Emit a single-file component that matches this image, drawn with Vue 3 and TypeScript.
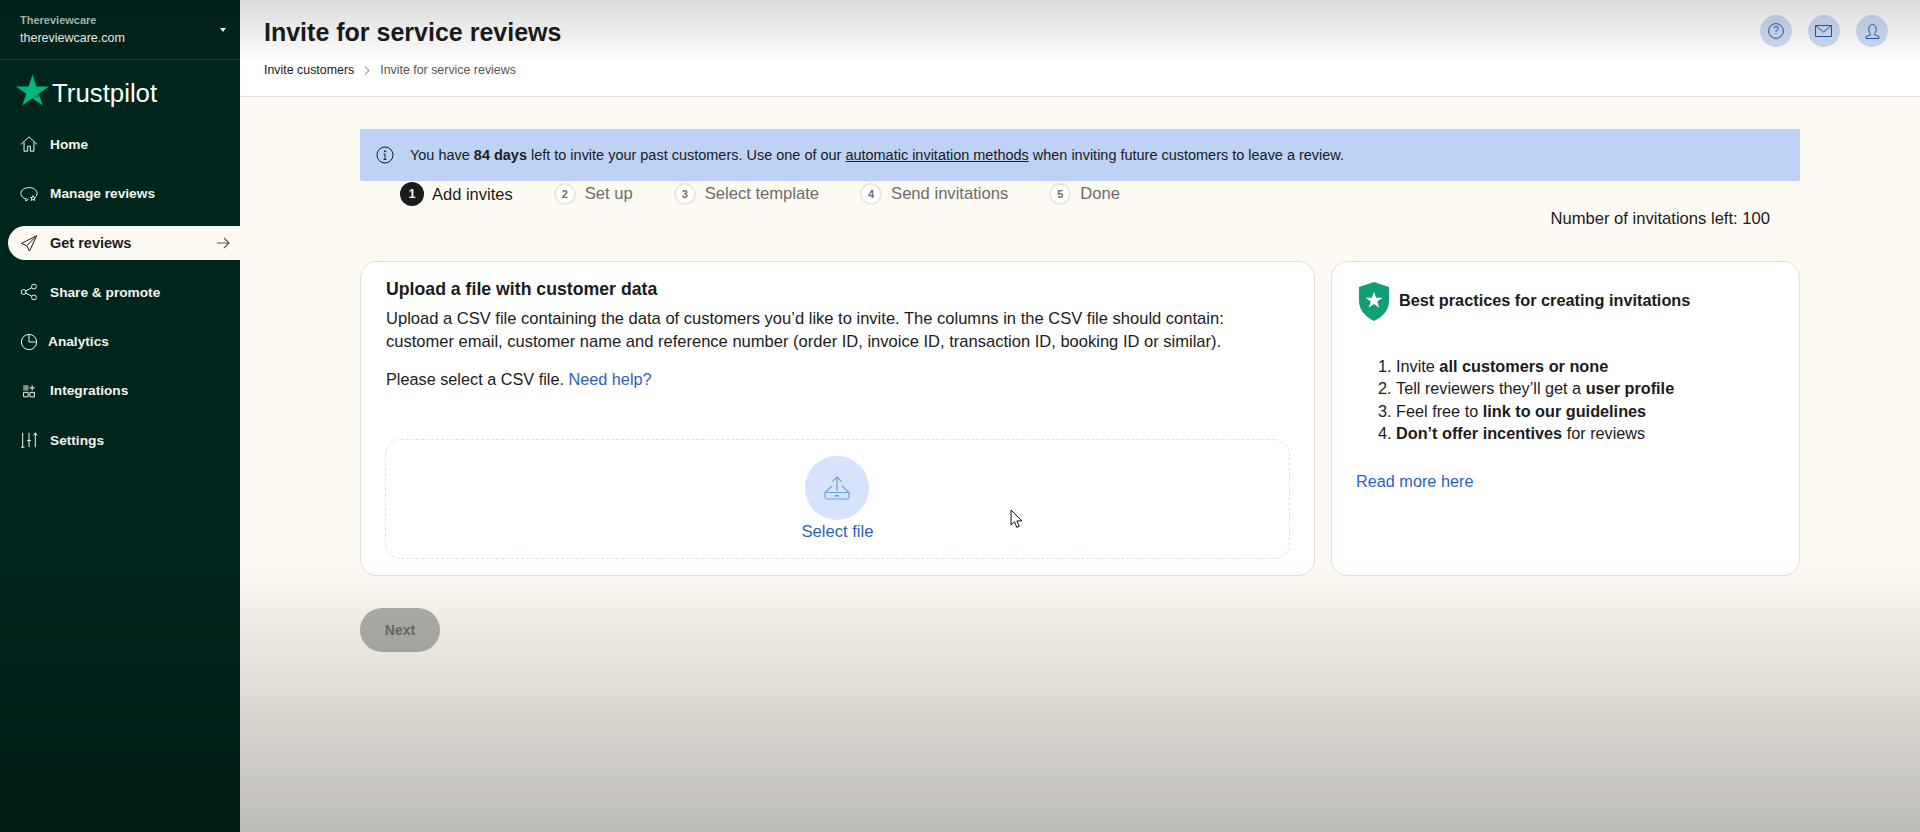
<script setup lang="ts">
const navItems = [
  { label: 'Home', icon: 'home' },
  { label: 'Manage reviews', icon: 'chat' },
  { label: 'Get reviews', icon: 'send', active: true },
  { label: 'Share & promote', icon: 'share' },
  { label: 'Analytics', icon: 'pie', tight: true },
  { label: 'Integrations', icon: 'grid' },
  { label: 'Settings', icon: 'sliders' }
]

const steps = ['Add invites', 'Set up', 'Select template', 'Send invitations', 'Done']
</script>

<template>
  <div class="page">
    <aside class="sidebar">
      <div class="account">
        <div>
          <div class="accountName">Thereviewcare</div>
          <div class="accountDomain">thereviewcare.com</div>
        </div>
        <span class="caret"></span>
      </div>
      <div class="logo">
        <svg width="33" height="32" viewBox="0 0 34 32">
          <path fill="#00b67a" d="M17 0l4 12.300h13l-10.500 7.600 4 12.100L17 24.500 6.500 32l4-12.100L0 12.300h13z" />
          <path fill="#04865c" d="M23.500 19.900l.9 2.900-7.400 1.700z" />
        </svg>
        <span class="logoText">Trustpilot</span>
      </div>
      <nav class="nav">
        <a v-for="item in navItems" :key="item.label" class="navItem" :class="{ active: item.active, tight: item.tight }">
          <svg class="navIcon" width="18" height="18" viewBox="0 0 20 20" fill="none" stroke="currentColor" stroke-width="1.100">
            <template v-if="item.icon === 'home'">
              <path d="M1 10.500L10 2l9 8.500M4.500 8v10h4v-5.500h3V18h4V8" />
            </template>
            <template v-else-if="item.icon === 'chat'">
              <path d="M6.500 16.500C3.500 15.800 1 13.500 1 10.500 1 6.500 5.300 4 10 4s9 2.500 9 6.500c0 1.200-.4 2.300-1 3.200" />
              <path d="M6.500 16v3l3-2.500M14.500 13l.9 2h2l-1.600 1.300.6 2-1.900-1.200-1.900 1.200.6-2-1.600-1.300h2z" />
            </template>
            <template v-else-if="item.icon === 'send'">
              <path d="M18.500 2L1.500 10.500l6 2.500 3 6zM18.500 2L7.500 13" />
            </template>
            <template v-else-if="item.icon === 'share'">
              <circle cx="4" cy="10" r="2.700" />
              <circle cx="15.500" cy="4" r="2.700" />
              <circle cx="15.500" cy="16" r="2.700" />
              <path d="M6.400 8.800l6.700-3.500M6.400 11.200l6.700 3.500" />
            </template>
            <template v-else-if="item.icon === 'pie'">
              <circle cx="10" cy="10" r="8.500" />
              <path d="M10 1.500V10h8.500" />
            </template>
            <template v-else-if="item.icon === 'grid'">
              <path fill="#7f938c" stroke="none" d="M3.500 3.500h6v6h-6z" />
              <path d="M4 11.500h5v5H4zM11 11.500h5v5h-5zM13.500 3.500v6M10.500 6.500h6" />
            </template>
            <template v-else>
              <path d="M3 2v16M1 18h4M10 2v16M7.800 10.500h4.400M17 2v16M15 5l2-3 2 3" />
            </template>
          </svg>
          <span>{{ item.label }}</span>
          <svg v-if="item.active" class="navArrow" width="14" height="12" viewBox="0 0 14 12" fill="none" stroke="currentColor" stroke-width="1.100">
            <path d="M1 6h12M8 1l5 5-5 5" />
          </svg>
        </a>
      </nav>
    </aside>

    <div class="main">
      <header class="topbar">
        <div>
          <h1>Invite for service reviews</h1>
          <div class="crumbs">
            <span class="crumbLink">Invite customers</span>
            <svg width="6" height="9" viewBox="0 0 6 9" fill="none" stroke="#6c6c6c"><path d="M1 .7l4 3.800-4 3.800" /></svg>
            <span class="crumbNow">Invite for service reviews</span>
          </div>
        </div>
        <div class="topActions">
          <button class="roundBtn">
            <svg width="16" height="16" viewBox="0 0 16 16" fill="none" stroke="#1c5bb8">
              <circle cx="8" cy="8" r="7.400" />
              <text x="8" y="11.300" text-anchor="middle" class="questionMark">?</text>
            </svg>
          </button>
          <button class="roundBtn mailBtn">
            <svg width="17" height="12" viewBox="0 0 17 12" fill="none" stroke="#1c5bb8">
              <path d="M.5.500h16v11H.5zM.5.500l8 6.500 8-6.500" />
            </svg>
          </button>
          <button class="roundBtn">
            <svg width="15" height="15" viewBox="0 0 15 15" fill="none" stroke="#1c5bb8">
              <path d="M5.300 9.500C3.800 7.800 3.700 5.800 3.900 4 4.200 1.800 5.800.5 7.500.5s3.300 1.300 3.600 3.500c.2 1.800.1 3.800-1.400 5.500v1.500l4.300 1.500v2H1v-2l4.300-1.500z" />
            </svg>
          </button>
        </div>
      </header>

      <section class="content">
        <div class="banner">
          <svg width="18" height="18" viewBox="0 0 18 18" fill="none" stroke="#1b1b1b">
            <circle cx="9" cy="9" r="8" />
            <path d="M9 8v5.500M7.500 8H9M7.500 13.500h3" />
            <circle cx="9" cy="5.300" r=".6" fill="#1b1b1b" />
          </svg>
          <span>You have <b>84 days</b> left to invite your past customers. Use one of our <u>automatic invitation methods</u> when inviting future customers to leave a review.</span>
        </div>

        <ol class="steps">
          <li v-for="(step, i) in steps" :key="step" class="step" :class="{ current: i === 0 }">
            <span class="stepNum">{{ i + 1 }}</span>
            <span>{{ step }}</span>
          </li>
        </ol>

        <div class="left100">Number of invitations left: 100</div>

        <div class="cards">
          <div class="card uploadCard">
            <h2>Upload a file with customer data</h2>
            <p class="intro">Upload a CSV file containing the data of customers you’d like to invite. The columns in the CSV file should contain: customer email, customer name and reference number (order ID, invoice ID, transaction ID, booking ID or similar).</p>
            <p class="select">Please select a CSV file. <a class="link">Need help?</a></p>
            <div class="dropzone">
              <div class="uploadCircle">
                <svg width="26" height="24" viewBox="0 0 26 24" fill="none" stroke="#6a9fdc" stroke-width="1.100">
                  <path d="M13 15V1M8.500 5.500L13 1l4.500 4.500" />
                  <path d="M8 10L1 16.500v4.700c0 1 .8 1.800 1.800 1.800h20.400c1 0 1.800-.8 1.800-1.800v-4.700L18 10M1 16.500h24" />
                  <path d="M11 19.800h4" stroke-width="1.600" />
                </svg>
              </div>
              <a class="link selectFile">Select file</a>
            </div>
          </div>

          <div class="card tipsCard">
            <div class="tipsHead">
              <svg width="30" height="39" viewBox="0 0 30 39">
                <path fill="#0f9f76" d="M15 0l15 5v14c0 9-6 15.500-15 20C6 34.500 0 28 0 19V5z" />
                <path fill="#fff" d="M15 9.500l2.100 6.200h6.500l-5.300 3.800 2 6.200-5.300-3.800-5.300 3.800 2-6.200-5.300-3.800h6.500z" />
              </svg>
              <h3>Best practices for creating invitations</h3>
            </div>
            <ol class="tips">
              <li>Invite <b>all customers or none</b></li>
              <li>Tell reviewers they’ll get a <b>user profile</b></li>
              <li>Feel free to <b>link to our guidelines</b></li>
              <li><b>Don’t offer incentives</b> for reviews</li>
            </ol>
            <a class="link">Read more here</a>
          </div>
        </div>

        <button class="nextBtn">Next</button>
      </section>
    </div>

    <!-- cursor from the capture -->
    <svg class="cursor" width="13" height="20" viewBox="0 0 13 20">
      <path fill="#fff" stroke="#111" stroke-width="1" d="M1 1v15l3.500-3.200 2.300 5.600 2.500-1-2.400-5.500H12z" />
    </svg>
    <div class="shadeTop"></div>
    <div class="shadeBottom"></div>
  </div>
</template>

<style>
body {
  margin: 0;
}
</style>

<style scoped>
.page {
  position: relative;
  display: flex;
  width: 1920px;
  height: 832px;
  overflow: hidden;
  background: #fdfaf3;
  color: #1b1b1b;
  font-family: "Liberation Sans", Arial, sans-serif;
}

.sidebar {
  width: 240px;
  flex-shrink: 0;
  background: #00251c;
  color: #fff;
}

.account {
  height: 60px;
  box-sizing: border-box;
  display: flex;
  align-items: center;
  justify-content: space-between;
  padding: 1px 14px 0 20px;
  border-bottom: 1px solid #173f33;
}

.accountName {
  font-size: 11px;
  font-weight: 700;
  line-height: 15px;
  color: #b4c2bc;
}

.accountDomain {
  font-size: 12.500px;
  line-height: 20px;
  color: #f2f5ef;
}

.caret {
  width: 0;
  height: 0;
  border-left: 3px solid transparent;
  border-right: 3px solid transparent;
  border-top: 4px solid #fff;
}

.logo {
  display: flex;
  align-items: center;
  gap: 3px;
  height: 32px;
  padding: 14px 0 0 16px;
}

.logoText {
  font-size: 25.800px;
  margin-top: 7px;
}

.nav {
  display: flex;
  flex-direction: column;
  gap: 15.400px;
  margin: 21px 0 0 8px;
}

.navItem {
  display: flex;
  align-items: center;
  gap: 12px;
  height: 34px;
  padding-left: 12px;
  font-size: 13.700px;
  font-weight: 700;
  color: #f2f5ef;
}

.navItem.tight {
  gap: 10px;
}

.navItem.active {
  background: #fdfaf3;
  color: #1b1b1b;
  border-radius: 17px 0 0 17px;
  font-size: 14.500px;
}

.navArrow {
  margin-left: auto;
  margin-right: 10px;
  color: #555;
}

.main {
  flex: 1;
  display: flex;
  flex-direction: column;
  min-width: 0;
}

.topbar {
  height: 97px;
  box-sizing: border-box;
  flex-shrink: 0;
  display: flex;
  justify-content: space-between;
  padding: 16px 32px 0 24px;
  background: #fff;
  border-bottom: 1px solid #e5e0d8;
}

h1 {
  margin: 0;
  font-size: 25px;
  line-height: 32px;
  font-weight: 700;
}

.crumbs {
  display: flex;
  align-items: center;
  gap: 10px;
  margin-top: 14px;
  font-size: 12.400px;
  line-height: 16px;
}

.crumbNow {
  color: #555;
}

.topActions {
  display: flex;
  gap: 16px;
  margin-top: -1px;
}

.roundBtn {
  width: 32px;
  height: 32px;
  padding: 0;
  border: none;
  border-radius: 50%;
  background: #cfdcf4;
  display: flex;
  align-items: center;
  justify-content: center;
}

.mailBtn svg {
  margin-left: -2px;
}

.questionMark {
  font-size: 10px;
  fill: #1c5bb8;
  stroke: none;
}

.content {
  padding: 32px 120px 0;
  display: flex;
  flex-direction: column;
}

.banner {
  height: 52px;
  box-sizing: border-box;
  display: flex;
  align-items: center;
  gap: 16px;
  padding-left: 16px;
  background: #bdd2f5;
  font-size: 14.480px;
  border-radius: 2px;
}

.steps {
  display: flex;
  gap: 41px;
  list-style: none;
  margin: 1px 0 0;
  padding: 0 0 0 40px;
  height: 24px;
  align-items: center;
}

.step {
  display: flex;
  align-items: center;
  gap: 9px;
  font-size: 16.600px;
  color: #6c6c6c;
}

.step.current {
  color: #1b1b1b;
  gap: 8px;
  font-size: 16.500px;
}

.stepNum {
  width: 22px;
  height: 22px;
  box-sizing: border-box;
  border: 2px solid #ece8e0;
  border-radius: 50%;
  background: #fff;
  font-size: 11px;
  font-weight: 700;
  display: flex;
  align-items: center;
  justify-content: center;
}

.current .stepNum {
  width: 24px;
  height: 24px;
  border: none;
  background: #1b1b1b;
  color: #fff;
  font-size: 12px;
}

.left100 {
  align-self: flex-end;
  margin: 3px 30px 0 0;
  font-size: 16.600px;
  line-height: 20px;
}

.cards {
  display: flex;
  gap: 16px;
  margin-top: 32px;
}

.card {
  height: 315px;
  box-sizing: border-box;
  background: #fff;
  border: 1px solid #e5e0d8;
  border-radius: 16px;
}

.uploadCard {
  width: 955px;
  padding: 15px 24px 15px 25px;
}

h2 {
  margin: 0;
  font-size: 17.700px;
  line-height: 24px;
}

.intro {
  margin: 7px 0 0;
  font-size: 16.550px;
  line-height: 22.500px;
}

.select {
  margin: 15px 0 0;
  font-size: 16.250px;
  line-height: 22px;
}

.link {
  color: #2a62c0;
}

.dropzone {
  height: 120px;
  box-sizing: border-box;
  margin: 49px 0 0 -1px;
  border: 1px dashed #e5e0d8;
  border-radius: 16px;
  display: flex;
  flex-direction: column;
  align-items: center;
  padding-top: 16px;
  font-size: 16.600px;
}

.uploadCircle {
  width: 64px;
  height: 64px;
  margin-right: 2px;
  border-radius: 50%;
  background: #d6e3fa;
  display: flex;
  align-items: center;
  justify-content: center;
}

.selectFile {
  margin-top: 2px;
  line-height: 20px;
}

.tipsCard {
  flex: 1;
  padding: 20px 24px;
  font-size: 16.250px;
}

.tipsHead {
  display: flex;
  align-items: center;
  gap: 10px;
  padding-left: 3px;
}

h3 {
  margin: 0 0 4px;
  font-size: 16.300px;
  line-height: 22px;
}

.tips {
  margin: 34px 0 0;
  padding-left: 40px;
  line-height: 22.400px;
}

.tipsCard .link {
  display: block;
  margin-top: 25px;
  line-height: 22px;
}

.nextBtn {
  align-self: flex-start;
  margin-top: 32px;
  width: 80px;
  height: 44px;
  border: none;
  border-radius: 22px;
  background: #b3b1ab;
  color: #6c6c6c;
  font-family: inherit;
  font-size: 14px;
  font-weight: 700;
}

.cursor {
  position: absolute;
  left: 1010px;
  top: 509px;
}

.shadeTop {
  position: absolute;
  inset: 0 0 auto 0;
  height: 64px;
  background: linear-gradient(rgba(0, 0, 0, 0.14), rgba(0, 0, 0, 0));
  pointer-events: none;
}

.shadeBottom {
  position: absolute;
  inset: auto 0 0 0;
  height: 272px;
  background: linear-gradient(rgba(0, 0, 0, 0), rgba(0, 0, 0, 0.25));
  pointer-events: none;
}
</style>
